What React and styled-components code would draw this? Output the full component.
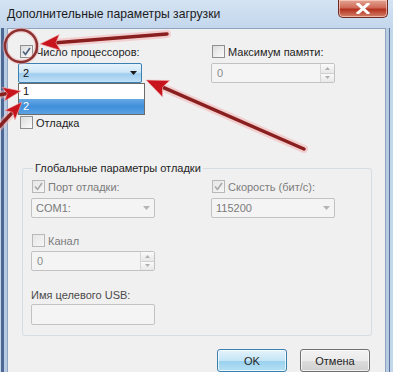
import React from 'react'
import styled, { createGlobalStyle } from 'styled-components'

const GlobalStyle = createGlobalStyle`
  html, body { margin: 0; padding: 0; }
  body {
    width: 393px;
    height: 372px;
    overflow: hidden;
    background: #bfd3ea;
    font-family: "Liberation Sans", Arial, sans-serif;
    font-size: 11px;
  }
`

const Window = styled.div`
  position: relative;
  width: 393px;
  height: 372px;
  display: flex;
  flex-direction: column;
  background: linear-gradient(#d4e3f3, #c2d6ec 30px, #b9cee6);
  overflow: hidden;
`

const TitleBar = styled.div`
  height: 28px;
  flex-shrink: 0;
  display: flex;
  align-items: center;
  padding: 0 5px 0 7px;
`

const Title = styled.div`
  flex: 1;
  font-size: 12.2px;
  color: #1b1b1b;
  margin-top: -1px;
`

const CloseButton = styled.div`
  align-self: flex-start;
  width: 50px;
  height: 18px;
  box-sizing: border-box;
  border: 1px solid #6e2a22;
  border-top: none;
  border-radius: 0 0 5px 5px;
  background: linear-gradient(#e4a594, #cf6a56 45%, #b3321f 55%, #d4806a);
  box-shadow: inset 0 0 0 1px rgba(255, 220, 210, 0.6);
  display: flex;
  align-items: center;
  justify-content: center;
`

const Frame = styled.div`
  flex: 1;
  display: flex;
`

const Side = styled.div`
  width: 7px;
  flex-shrink: 0;
  background: ${p => p.$left
    ? 'linear-gradient(to right, #c4d6ea 0 1px, #4d6894 1px 4px, #b7cbe3 4px)'
    : 'linear-gradient(to right, #b7cbe3 0 3px, #5a739c 3px 4px, #c4d6ea 4px)'};
`

const Content = styled.div`
  flex: 1;
  background: #f0f0f0;
  border: 1px solid #8ea3bf;
  border-bottom: none;
  display: flex;
  flex-direction: column;
  padding: 15px 0 0 10px;
`

const Columns = styled.div`
  display: grid;
  grid-template-columns: ${p => p.$left}px 1fr;
`

const Column = styled.div`
  display: flex;
  flex-direction: column;
`

const CheckRow = styled.label`
  height: 15px;
  display: flex;
  align-items: center;
  gap: 3px;
  margin-left: ${p => p.$indent ?? 2}px;
  margin-top: ${p => p.$top ?? 0}px;
  color: ${p => (p.$disabled ? '#7c7c7c' : '#1e1e1e')};
  white-space: nowrap;
`

const Box = styled.span`
  width: 13px;
  height: 13px;
  box-sizing: border-box;
  border: 1px solid ${p => (p.$disabled ? '#b8b8b8' : '#8f8f8f')};
  background: ${p => (p.$disabled
    ? 'linear-gradient(135deg, #e6e6e6, #f6f6f6)'
    : 'linear-gradient(135deg, #dcdcdc, #fbfbfb)')};
  display: flex;
  align-items: center;
  justify-content: center;
  flex-shrink: 0;
`

const Combo = styled.div`
  position: relative;
  width: 124px;
  height: 20px;
  box-sizing: border-box;
  margin-top: ${p => p.$top ?? 4}px;
  border: 1px solid ${p => (p.$active ? '#3c7fb1' : '#c2c2c2')};
  border-radius: 2px;
  background: ${p => (p.$active
    ? 'linear-gradient(#e6f3fc, #cfe7f8 45%, #9fcdef 55%, #bfe0f7)'
    : '#f4f4f4')};
  color: ${p => (p.$active ? '#111' : '#7a7a7a')};
  display: flex;
  align-items: center;
  padding: 0 4px;
`

const ComboText = styled.span`
  flex: 1;
`

const DropList = styled.div`
  position: absolute;
  left: -1px;
  top: 19px;
  width: 125px;
  border: 1px solid #6b6b6b;
  background: #fff;
  z-index: 2;
`

const DropItem = styled.div`
  height: 15px;
  line-height: 15px;
  padding-left: 4px;
  background: ${p => (p.$selected
    ? 'linear-gradient(#67a9e4, #3f8fda 50%, #5ca2e2)'
    : '#fff')};
  color: ${p => (p.$selected ? '#fff' : '#111')};
`

const Spin = styled.div`
  width: 124px;
  height: 20px;
  box-sizing: border-box;
  margin-top: ${p => p.$top ?? 4}px;
  border: 1px solid #c2c2c2;
  border-radius: 2px;
  background: #f4f4f4;
  color: #8a8a8a;
  display: flex;
  align-items: center;
  padding-left: 5px;
`

const SpinButtons = styled.div`
  margin-left: auto;
  width: 13px;
  height: 18px;
  border-left: 1px solid #d6d6d6;
  display: flex;
  flex-direction: column;
`

const SpinButton = styled.div`
  flex: 1;
  display: flex;
  align-items: center;
  justify-content: center;
  background: linear-gradient(#fafafa, #e8e8e8);
  border-top: ${p => (p.$down ? '1px solid #d0d0d0' : 'none')};
`

const Group = styled.fieldset`
  margin: 30px 13px 0 4px;
  padding: 3px 0 10px 8px;
  border: 1px solid #d5dce2;
  border-radius: 3px;
  min-width: 0;
`

const Legend = styled.legend`
  padding: 0 2px;
  margin-left: 2px;
  height: 16px;
  line-height: 16px;
  color: #1e1e1e;
`

const FieldLabel = styled.div`
  margin-top: 16px;
  height: 16px;
  line-height: 16px;
  color: #4a4a4a;
`

const TextBox = styled.div`
  width: 124px;
  height: 21px;
  box-sizing: border-box;
  margin-top: 1px;
  border: 1px solid #c2c2c2;
  border-radius: 2px;
  background: #f4f4f4;
`

const ButtonRow = styled.div`
  display: flex;
  justify-content: flex-end;
  gap: 13px;
  margin-top: 13px;
  padding-right: 15px;
`

const Button = styled.button`
  width: ${p => p.$width}px;
  height: 23px;
  font: inherit;
  color: #1e1e1e;
  border-radius: 3px;
  border: 1px solid ${p => (p.$default ? '#3c7fb1' : '#707070')};
  background: ${p => (p.$default
    ? 'linear-gradient(#e5f4fc, #c4e5f6 50%, #98d1ef 51%, #b6e0f4)'
    : 'linear-gradient(#f2f2f2, #ebebeb 50%, #dddddd 51%, #cfcfcf)')};
  box-shadow: inset 0 0 0 1px rgba(255, 255, 255, 0.7);
  padding: 0;
`

const Overlay = styled.svg`
  position: absolute;
  left: 0;
  top: 0;
  pointer-events: none;
  z-index: 5;
`

function Check({ checked, disabled }) {
  return (
    <Box $disabled={disabled}>
      {checked && (
        <svg width="9" height="9" viewBox="0 0 9 9">
          <path d="M1 4.5 L3.5 7.5 L8 1" fill="none"
            stroke={disabled ? '#a8a8a8' : '#4a5f7a'} strokeWidth="1.6" />
        </svg>
      )}
    </Box>
  )
}

function Arrow({ color }) {
  return (
    <svg width="7" height="4" viewBox="0 0 7 4" style={{ flexShrink: 0 }}>
      <path d="M0 0 H7 L3.5 4 Z" fill={color} />
    </svg>
  )
}

function SpinArrow({ down }) {
  return (
    <svg width="5" height="3" viewBox="0 0 5 3">
      <path d={down ? 'M0 0 H5 L2.5 3 Z' : 'M0 3 H5 L2.5 0 Z'} fill="#b0b0b0" />
    </svg>
  )
}

// red marks drawn over the screenshot
function RedArrow({ x1, y1, x2, y2, len = 20, width = 16 }) {
  const dx = x2 - x1
  const dy = y2 - y1
  const d = Math.hypot(dx, dy)
  const ux = dx / d
  const uy = dy / d
  const bx = x2 - ux * len
  const by = y2 - uy * len
  const px = -uy * width / 2
  const py = ux * width / 2
  const pts = `${x2},${y2} ${bx + px},${by + py} ${bx + ux * 4},${by + uy * 4} ${bx - px},${by - py}`
  return (
    <g>
      <line x1={x1} y1={y1} x2={bx} y2={by} stroke="#f4b4b4" strokeWidth="8" strokeLinecap="round" opacity="0.55" />
      <line x1={x1} y1={y1} x2={bx + ux * 4} y2={by + uy * 4} stroke="#8a1f1f" strokeWidth="3.5" strokeLinecap="round" />
      <polygon points={pts} fill="#c8141c" stroke="#f4b4b4" strokeWidth="1" strokeOpacity="0.6" />
    </g>
  )
}

export default function App() {
  return (
    <>
      <GlobalStyle />
      <Window>
        <TitleBar>
          <Title>Дополнительные параметры загрузки</Title>
          <CloseButton>
            <svg width="14" height="11" viewBox="0 0 14 11">
              <path d="M2 1 L12 10 M12 1 L2 10" stroke="#fff" strokeWidth="3" strokeLinecap="square" />
            </svg>
          </CloseButton>
        </TitleBar>

        <Frame>
          <Side $left />
          <Content>
            {/* top options */}
            <Columns $left={193}>
              <Column>
                <CheckRow>
                  <Check checked />
                  Число процессоров:
                </CheckRow>
                <Combo $active>
                  <ComboText>2</ComboText>
                  <Arrow color="#1a1a1a" />
                  <DropList>
                    <DropItem>1</DropItem>
                    <DropItem $selected>2</DropItem>
                  </DropList>
                </Combo>
                <CheckRow $top={32}>
                  <Check />
                  Отладка
                </CheckRow>
              </Column>
              <Column>
                <CheckRow $indent={1}>
                  <Check />
                  Максимум памяти:
                </CheckRow>
                <Spin>
                  0
                  <SpinButtons>
                    <SpinButton><SpinArrow /></SpinButton>
                    <SpinButton $down><SpinArrow down /></SpinButton>
                  </SpinButtons>
                </Spin>
              </Column>
            </Columns>

            {/* global debug settings */}
            <Group>
              <Legend>Глобальные параметры отладки</Legend>
              <Columns $left={180}>
                <Column>
                  <CheckRow $indent={1} $disabled>
                    <Check checked disabled />
                    Порт отладки:
                  </CheckRow>
                  <Combo>
                    <ComboText>COM1:</ComboText>
                    <Arrow color="#b4b4b4" />
                  </Combo>
                </Column>
                <Column>
                  <CheckRow $indent={1} $disabled>
                    <Check checked disabled />
                    Скорость (бит/с):
                  </CheckRow>
                  <Combo>
                    <ComboText>115200</ComboText>
                    <Arrow color="#b4b4b4" />
                  </Combo>
                </Column>
              </Columns>
              <CheckRow $indent={1} $top={15} $disabled>
                <Check disabled />
                Канал
              </CheckRow>
              <Spin $top={3}>
                0
                <SpinButtons>
                  <SpinButton><SpinArrow /></SpinButton>
                  <SpinButton $down><SpinArrow down /></SpinButton>
                </SpinButtons>
              </Spin>
              <FieldLabel>Имя целевого USB:</FieldLabel>
              <TextBox />
            </Group>

            <ButtonRow>
              <Button $default $width={70}>OK</Button>
              <Button $width={70}>Отмена</Button>
            </ButtonRow>
          </Content>
          <Side />
        </Frame>

        <Overlay width="393" height="372" viewBox="0 0 393 372">
          <ellipse cx="21" cy="46" rx="16" ry="16" fill="none" stroke="#f2b0b0" strokeWidth="5" opacity="0.5" />
          <ellipse cx="21" cy="46" rx="16" ry="16" fill="none" stroke="#8c3030" strokeWidth="2.5" />
          <RedArrow x1={167} y1={34} x2={40} y2={44} />
          <RedArrow x1={304} y1={149} x2={146} y2={80} len={22} width={18} />
          <RedArrow x1={-12} y1={97} x2={21} y2={91} len={18} width={14} />
          <RedArrow x1={-2} y1={128} x2={22} y2={102} len={18} width={14} />
        </Overlay>
      </Window>
    </>
  )
}
